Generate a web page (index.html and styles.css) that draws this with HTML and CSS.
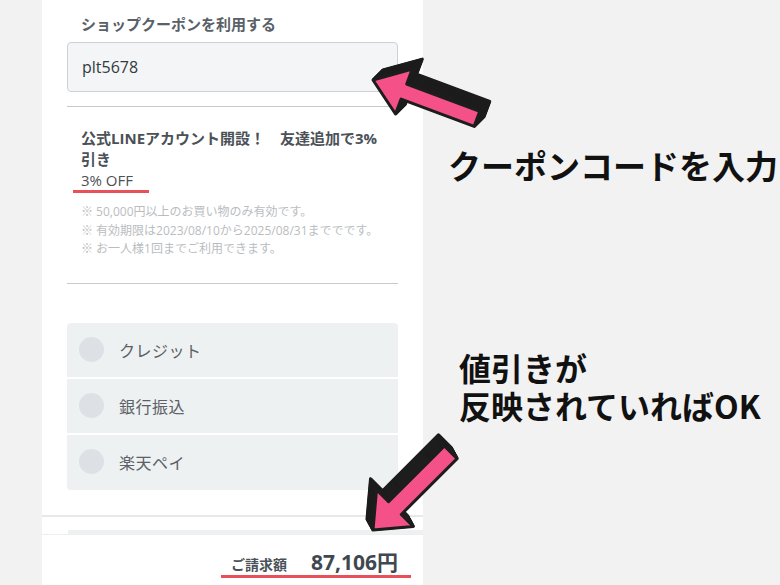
FILE: index.html
```html
<!DOCTYPE html>
<html lang="ja">
<head>
<meta charset="utf-8">
<title>クーポン</title>
<link rel="stylesheet" href="styles.css">
</head>
<body>
<div class="stage">
  <div class="panel">
    <div class="sec">
      <div class="label">ショップクーポンを利用する</div>
      <div class="input">plt5678</div>
      <div class="rule rule-a"></div>
      <div class="coupon">
        <div class="c-title">公式LINEアカウント開設！　友達追加で3%引き</div>
        <div class="c-off"><span class="off">3% OFF</span></div>
        <div class="c-notes">
          <div>※ 50,000円以上のお買い物のみ有効です。</div>
          <div>※ 有効期限は2023/08/10から2025/08/31まででです。</div>
          <div>※ お一人様1回までご利用できます。</div>
        </div>
      </div>
      <div class="rule rule-b"></div>
      <div class="pay">
        <div class="pay-row"><span class="radio"></span><span class="pay-name">クレジット</span></div>
        <div class="pay-row"><span class="radio"></span><span class="pay-name">銀行振込</span></div>
        <div class="pay-row"><span class="radio"></span><span class="pay-name">楽天ペイ</span></div>
      </div>
    </div>
    <div class="full-rule"></div>
    <div class="strip"></div>
    <div class="footer">
      <div class="total-wrap">
        <span class="t-label">ご請求額</span>
        <span class="t-value">87,106円</span>
      </div>
    </div>
  </div>
  <div class="notes">
    <div class="note note-1">クーポンコードを入力</div>
    <div class="note note-2">
      <div class="n2-line">値引きが</div>
      <div class="n2-line">反映されていればOK</div>
    </div>
  </div>
  <svg class="arrows" width="780" height="585" viewBox="0 0 780 585">
    <defs>
      <polygon id="a1" points="0,0 33,-24 33,-8 111,-8 111,8 33,8 33,24"/>
      <polygon id="a2" points="0,0 31,-26 31,-9 110,-9 110,9 31,9 31,26"/>
    </defs>
    <g transform="translate(373 80)" fill="#1d1d1d" stroke="#1d1d1d" stroke-width="3" stroke-linejoin="round">
      <use href="#a1" transform="translate(10 -10) rotate(20.5)"/>
      <use href="#a1" transform="translate(9.5 -9.5) rotate(20.5)"/>
      <use href="#a1" transform="translate(9 -9) rotate(20.5)"/>
      <use href="#a1" transform="translate(8.5 -8.5) rotate(20.5)"/>
      <use href="#a1" transform="translate(8 -8) rotate(20.5)"/>
      <use href="#a1" transform="translate(7.5 -7.5) rotate(20.5)"/>
      <use href="#a1" transform="translate(7 -7) rotate(20.5)"/>
      <use href="#a1" transform="translate(6.5 -6.5) rotate(20.5)"/>
      <use href="#a1" transform="translate(6 -6) rotate(20.5)"/>
      <use href="#a1" transform="translate(5.5 -5.5) rotate(20.5)"/>
      <use href="#a1" transform="translate(5 -5) rotate(20.5)"/>
      <use href="#a1" transform="translate(4.5 -4.5) rotate(20.5)"/>
      <use href="#a1" transform="translate(4 -4) rotate(20.5)"/>
      <use href="#a1" transform="translate(3.5 -3.5) rotate(20.5)"/>
      <use href="#a1" transform="translate(3 -3) rotate(20.5)"/>
      <use href="#a1" transform="translate(2.5 -2.5) rotate(20.5)"/>
      <use href="#a1" transform="translate(2 -2) rotate(20.5)"/>
      <use href="#a1" transform="translate(1.5 -1.5) rotate(20.5)"/>
      <use href="#a1" transform="translate(1 -1) rotate(20.5)"/>
      <use href="#a1" transform="translate(0.5 -0.5) rotate(20.5)"/>
      <use href="#a1" transform="rotate(20.5)" fill="#f45189"/>
    </g>
    <g transform="translate(373 530)" fill="#1d1d1d" stroke="#1d1d1d" stroke-width="3" stroke-linejoin="round">
      <use href="#a2" transform="translate(-6 -11) rotate(-45)"/>
      <use href="#a2" transform="translate(-5.7 -10.45) rotate(-45)"/>
      <use href="#a2" transform="translate(-5.4 -9.9) rotate(-45)"/>
      <use href="#a2" transform="translate(-5.1 -9.35) rotate(-45)"/>
      <use href="#a2" transform="translate(-4.8 -8.8) rotate(-45)"/>
      <use href="#a2" transform="translate(-4.5 -8.25) rotate(-45)"/>
      <use href="#a2" transform="translate(-4.2 -7.7) rotate(-45)"/>
      <use href="#a2" transform="translate(-3.9 -7.15) rotate(-45)"/>
      <use href="#a2" transform="translate(-3.6 -6.6) rotate(-45)"/>
      <use href="#a2" transform="translate(-3.3 -6.05) rotate(-45)"/>
      <use href="#a2" transform="translate(-3 -5.5) rotate(-45)"/>
      <use href="#a2" transform="translate(-2.7 -4.95) rotate(-45)"/>
      <use href="#a2" transform="translate(-2.4 -4.4) rotate(-45)"/>
      <use href="#a2" transform="translate(-2.1 -3.85) rotate(-45)"/>
      <use href="#a2" transform="translate(-1.8 -3.3) rotate(-45)"/>
      <use href="#a2" transform="translate(-1.5 -2.75) rotate(-45)"/>
      <use href="#a2" transform="translate(-1.2 -2.2) rotate(-45)"/>
      <use href="#a2" transform="translate(-0.9 -1.65) rotate(-45)"/>
      <use href="#a2" transform="translate(-0.6 -1.1) rotate(-45)"/>
      <use href="#a2" transform="translate(-0.3 -0.55) rotate(-45)"/>
      <use href="#a2" transform="rotate(-45)" fill="#f45189"/>
    </g>
  </svg>
</div>
</body>
</html>
```

FILE: styles.css
```css
* { box-sizing: border-box; }
html, body { margin: 0; padding: 0; }
body {
  width: 780px;
  height: 585px;
  overflow: hidden;
  background: #f2f2f2;
  font-family: "Open Sans", "Noto Sans CJK JP", sans-serif;
}
.stage {
  position: relative;
  width: 780px;
  height: 585px;
  display: flex;
}
.panel {
  margin-left: 42px;
  width: 381px;
  height: 585px;
  background: #fff;
  display: flex;
  flex-direction: column;
}
.sec {
  padding: 13px 25px 0 25px;
}
.label {
  font-family: "Noto Sans CJK JP", sans-serif;
  font-size: 15px;
  line-height: 22px;
  font-weight: 700;
  color: #596067;
  padding-left: 14px;
  margin-bottom: 7px;
}
.input {
  height: 50px;
  border: 1px solid #cdd2d6;
  border-radius: 4px;
  background: #f3f5f6;
  padding-left: 14px;
  font-size: 16px;
  line-height: 48px;
  color: #333a40;
}
.rule {
  height: 1px;
  background: #c6cbce;
}
.rule-a { margin-top: 14px; }
.rule-b { margin-top: 24px; }
.coupon {
  padding: 21px 14px 0 14px;
}
.c-title {
  font-family: "Open Sans", "Noto Sans CJK JP", sans-serif;
  font-size: 15px;
  line-height: 21px;
  font-weight: 700;
  color: #4b5157;
}
.c-off {
  font-size: 15px;
  line-height: 21px;
  color: #4b5157;
}
.off {
  position: relative;
  display: inline-block;
}
.off::after {
  content: "";
  position: absolute;
  left: -8px;
  top: 20px;
  width: 76px;
  height: 3px;
  background: #e8505a;
}
.c-notes {
  margin-top: 12px;
  font-size: 12px;
  line-height: 18.5px;
  color: #b9bdc0;
}
.pay {
  margin-top: 39px;
  display: flex;
  flex-direction: column;
  gap: 2px;
}
.pay-row {
  height: 54px;
  background: #eef1f2;
  display: flex;
  align-items: center;
  padding-left: 12px;
}
.pay-row:first-child { border-radius: 4px 4px 0 0; }
.pay-row:last-child {
  border-radius: 0 0 4px 4px;
  box-shadow: 0 1px 1px rgba(0, 0, 0, 0.07);
}
.radio {
  width: 25px;
  height: 25px;
  border-radius: 50%;
  background: #dde1e5;
  margin-right: 15px;
}
.pay-name {
  font-family: "Noto Sans CJK JP", sans-serif;
  font-size: 16px;
  letter-spacing: 0.5px;
  color: #5b6167;
}
.full-rule {
  margin-top: 26px;
  height: 2px;
  background: #e7e8e8;
}
.strip {
  margin-top: 13px;
  margin-left: 26px;
  height: 4px;
  background: #eef1f1;
}
.footer {
  border-top: 1px solid #eceeef;
  flex: 1;
  display: flex;
  justify-content: flex-end;
  padding: 15px 25px 0 0;
}
.total-wrap {
  position: relative;
  display: flex;
  align-items: baseline;
  height: 24px;
  line-height: 24px;
}
.total-wrap::after {
  content: "";
  position: absolute;
  left: -10px;
  right: -13px;
  top: 25px;
  height: 3px;
  background: #e8505a;
}
.t-label {
  font-family: "Noto Sans CJK JP", sans-serif;
  font-size: 14px;
  font-weight: 700;
  color: #4b5157;
  margin-right: 24px;
}
.t-value {
  font-size: 21px;
  font-weight: 700;
  color: #3f4850;
}
.notes {
  flex: 1;
  display: flex;
  flex-direction: column;
  font-family: "Noto Sans CJK JP", sans-serif;
  font-weight: 700;
  color: #111;
  white-space: nowrap;
}
.note-1 {
  margin-top: 145px;
  margin-left: 25px;
  font-size: 33px;
  line-height: 40px;
}
.note-2 {
  margin-top: 163px;
  margin-left: 36px;
  font-size: 32px;
  line-height: 38px;
}
.n2-line {
  height: 38px;
}
.arrows {
  position: absolute;
  left: 0;
  top: 0;
  pointer-events: none;
}
```
